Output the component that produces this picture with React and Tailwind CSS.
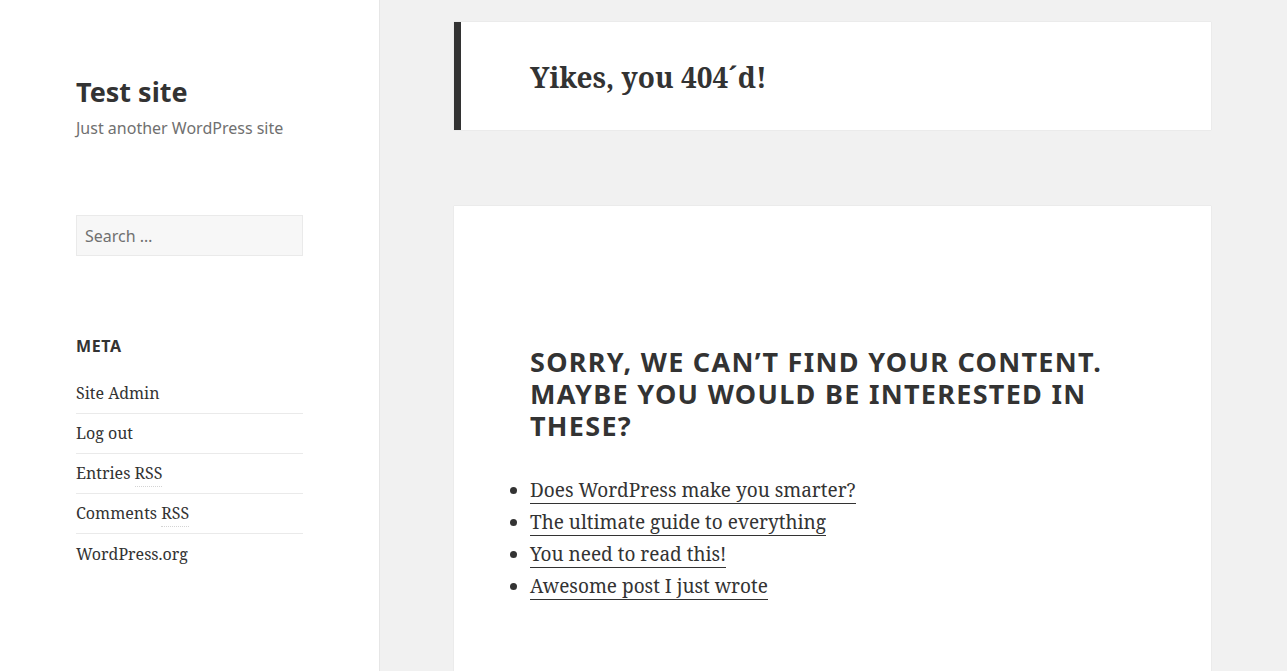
import React from 'react'

const serif = { fontFamily: '"Noto Serif", "DejaVu Serif", serif' }

const metaLinks = [
    { label: 'Site Admin' },
    { label: 'Log out' },
    { label: 'Entries', abbr: 'RSS' },
    { label: 'Comments', abbr: 'RSS' },
    { label: 'WordPress.org' },
]

const posts = [
    'Does WordPress make you smarter?',
    'The ultimate guide to everything',
    'You need to read this!',
    'Awesome post I just wrote',
]

const Sidebar = () => (
    <aside className="w-[380px] shrink-0 bg-white border-r border-[#e6e6e6] min-h-[671px] pl-[76px] pt-[74px] text-[#333]">
        {/* Брендинг */}
        <h1 className="text-[27px] font-bold leading-[36px]">Test site</h1>
        <p className="text-[16px] leading-[24px] text-[#707070] mt-[6px]">Just another WordPress site</p>

        {/* Поиск */}
        <div className="mt-[75px] w-[227px] h-[41px] bg-[#f7f7f7] border border-[#eaeaea] flex items-center pl-[8px] text-[16px] text-[#707070]">
            Search …
        </div>

        {/* Мета */}
        <h2 className="mt-[78px] text-[16px] font-bold uppercase tracking-[0.04em] leading-[24px]">Meta</h2>
        <ul className="mt-[16px] w-[227px]" style={serif}>
            {metaLinks.map((item, i) => (
                <li
                    key={item.label}
                    className={`h-[40px] flex items-center text-[16px] pb-[1px] ${i < metaLinks.length - 1 ? 'border-b border-[#eaeaea]' : ''}`}
                >
                    <span>
                        {item.label}
                        {item.abbr && (
                            <>
                                {' '}
                                <abbr className="no-underline border-b border-dotted border-[#d4d4d4] pb-[2px]">{item.abbr}</abbr>
                            </>
                        )}
                    </span>
                </li>
            ))}
        </ul>
    </aside>
)

const App = () => (
    <div className="flex w-full min-h-[671px] h-[671px] overflow-hidden bg-[#f1f1f1] text-[#333]" style={{ fontFamily: '"Noto Sans", sans-serif' }}>
        <Sidebar />

        <main className="flex-1 pl-[74px] pt-[22px]">
            {/* Заголовок страницы */}
            <header className="w-[757px] h-[108px] bg-white border-l-[7px] border-[#333] shadow-[0_0_1px_rgba(0,0,0,0.15)] flex items-center pl-[69px]">
                <h1 className="text-[28px] font-bold leading-[32px] pt-[1px]" style={serif}>Yikes, you 404´d!</h1>
            </header>

            {/* Контент */}
            <section className="mt-[76px] w-[757px] h-[500px] bg-white shadow-[0_0_1px_rgba(0,0,0,0.15)] px-[76px] pt-[140px]">
                <h2 className="text-[27px] font-bold uppercase tracking-[0.048em] leading-[32px]">
                    Sorry, we can’t find your content. Maybe you would be interested in these?
                </h2>
                <ul className="mt-[32px] list-disc list-outside pl-0 ml-0" style={serif}>
                    {posts.map((p) => (
                        <li key={p} className="text-[19px] leading-[32px]">
                            <a href="#" className="border-b border-[#333]">{p}</a>
                        </li>
                    ))}
                </ul>
            </section>
        </main>
    </div>
)

export default App
